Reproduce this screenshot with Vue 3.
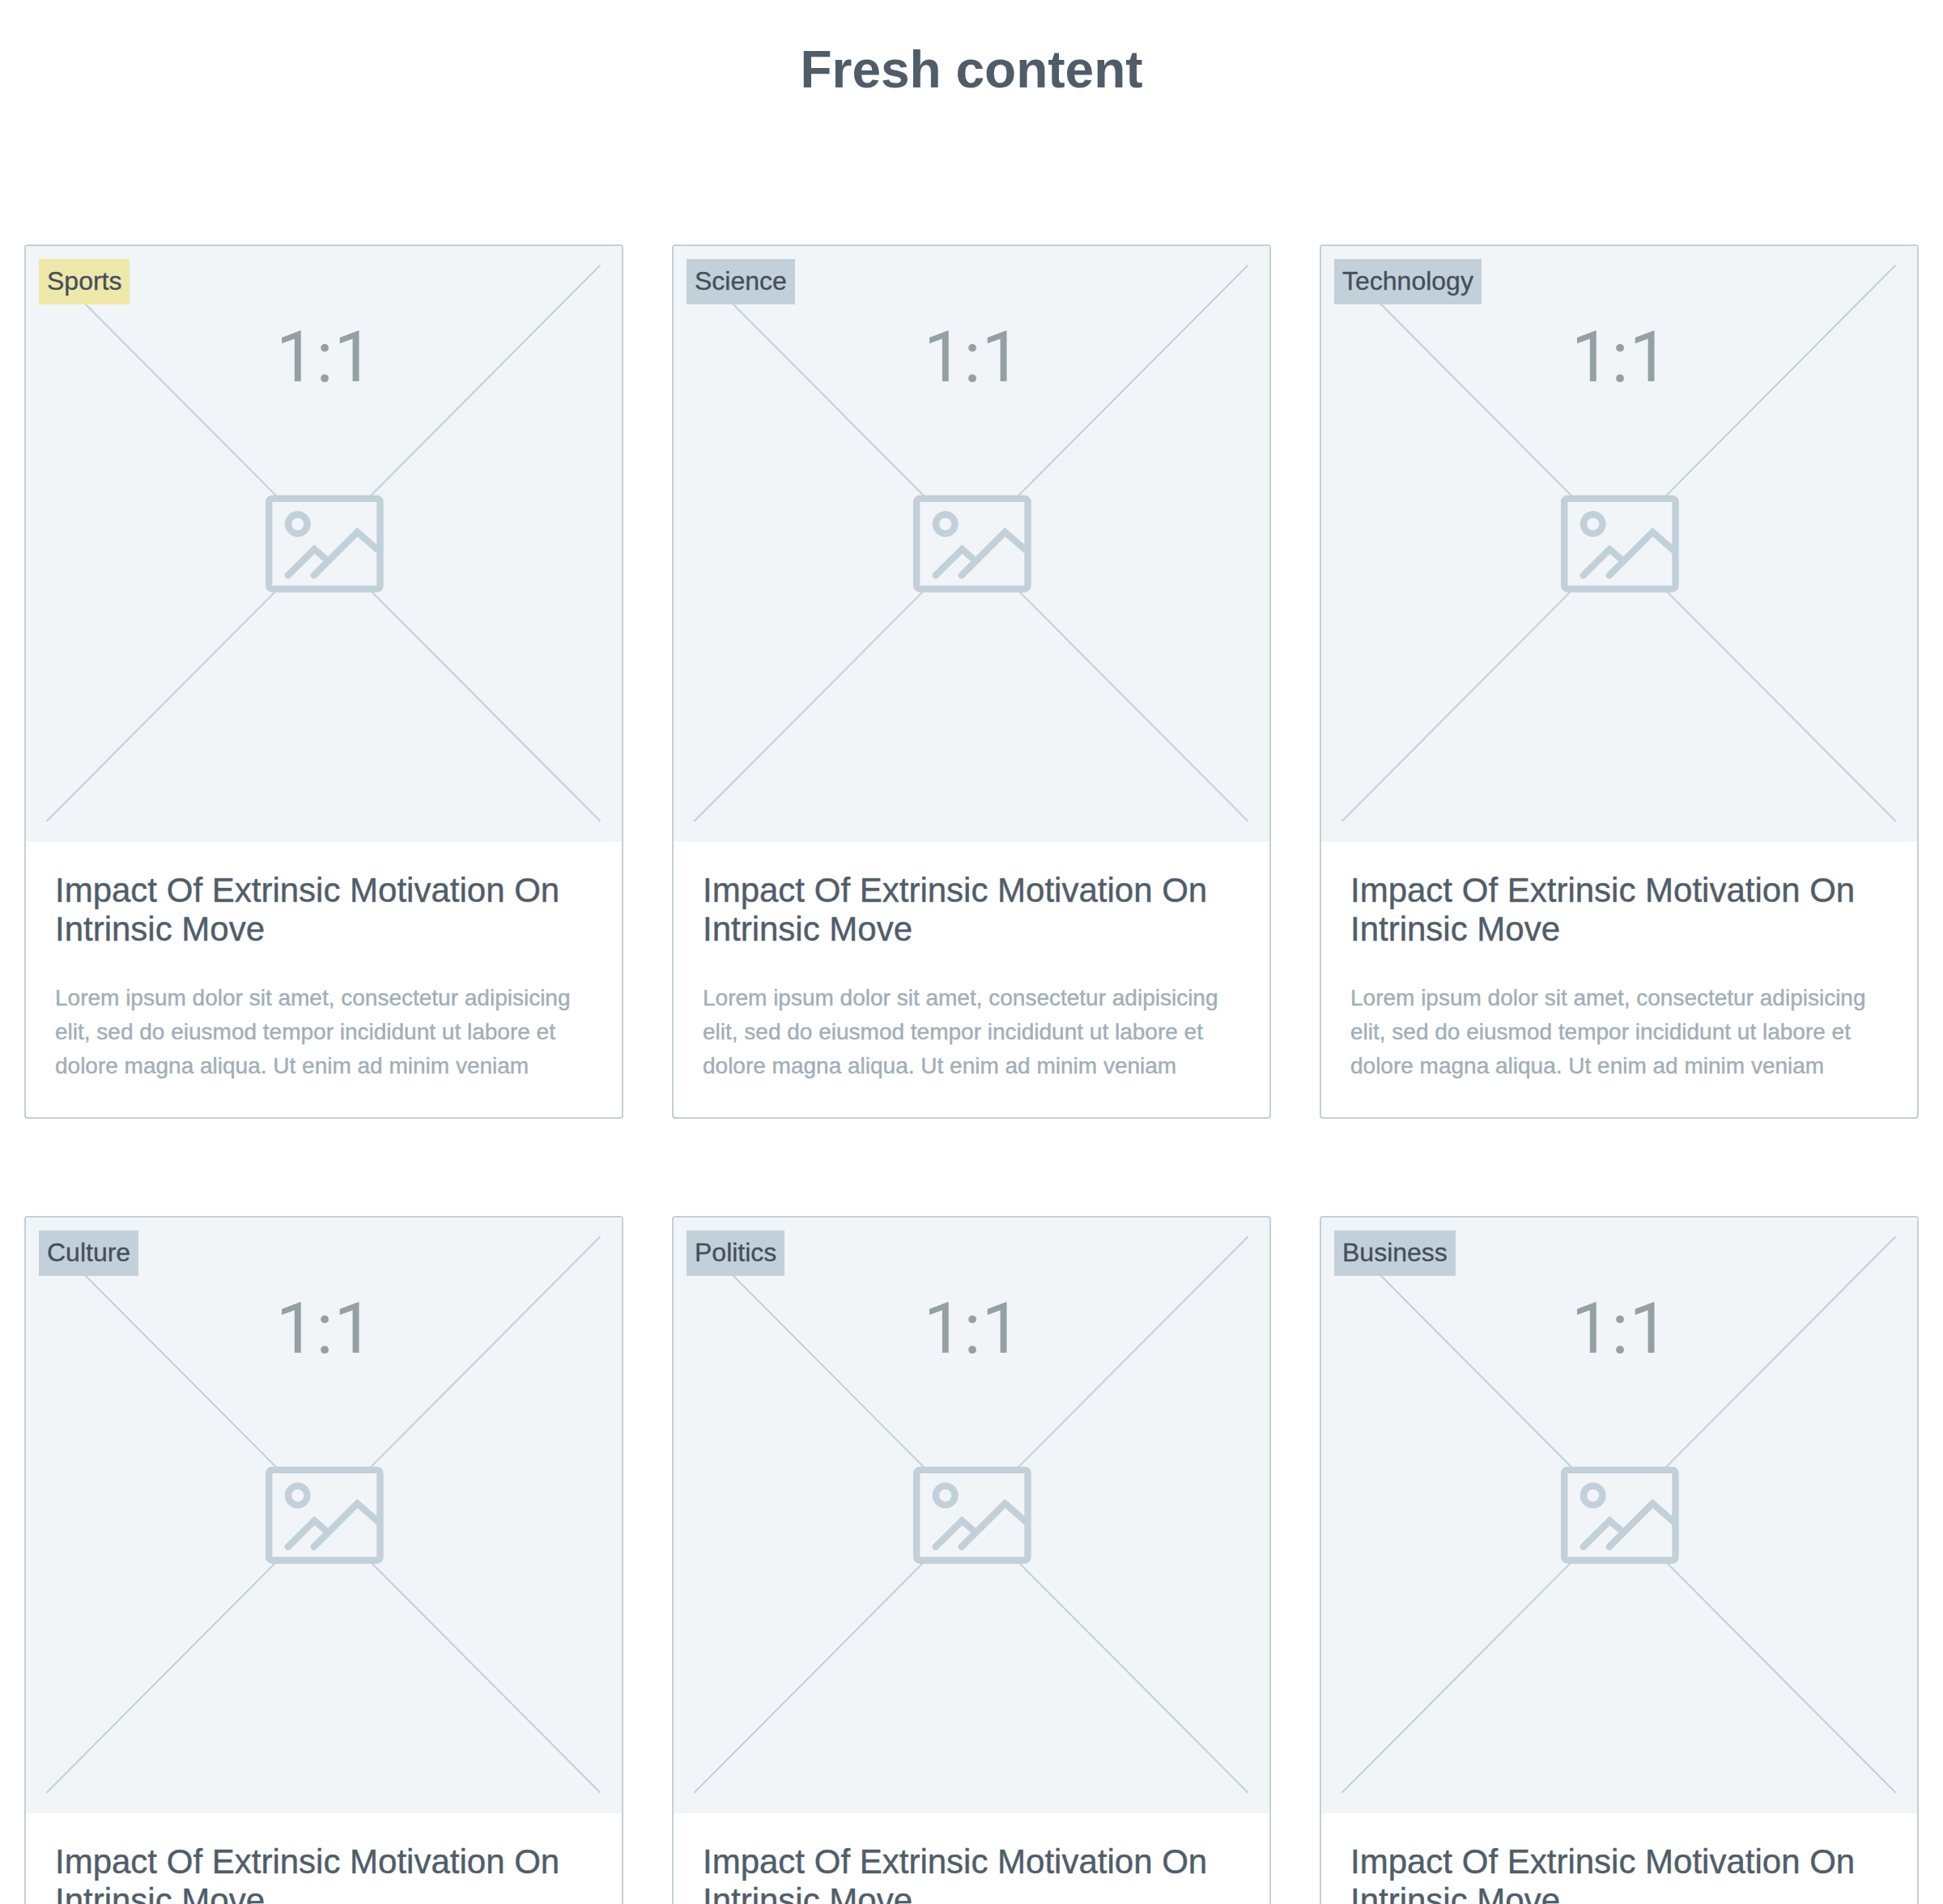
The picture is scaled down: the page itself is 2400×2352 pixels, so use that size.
<script setup>
const cards = [
  { tag: 'Sports', active: true },
  { tag: 'Science' },
  { tag: 'Technology' },
  { tag: 'Culture' },
  { tag: 'Politics' },
  { tag: 'Business' },
]
</script>

<template>
  <main class="page">
    <h1 class="heading">Fresh content</h1>
    <section class="grid">
      <article v-for="card in cards" :key="card.tag" class="card">
        <div class="media">
          <svg class="placeholder" viewBox="0 0 736 736" aria-hidden="true">
            <g fill="none" stroke="#c2d0d9">
              <path d="M25.5 23.5 709.5 710.5M709.5 23.5 25.5 710.5" stroke-width="2" />
              <g stroke-width="8.4">
                <rect x="300.2" y="311.9" width="137.3" height="111.6" rx="4" fill="#f1f5f8" />
                <circle cx="335.7" cy="343.3" r="11.8" />
                <path d="M323.7 406.7 356.3 374.4 371 387.2M355.7 406.7 409.3 353.2 435 375.6" stroke-linecap="round" />
              </g>
            </g>
            <text class="ratio" x="369.6" y="166.7" text-anchor="middle">1:1</text>
          </svg>
          <span class="tag" :class="{ active: card.active }">{{ card.tag }}</span>
        </div>
        <div class="body">
          <h2 class="title">Impact Of Extrinsic Motivation On Intrinsic Move</h2>
          <p class="text">
            Lorem ipsum dolor sit amet, consectetur adipisicing elit, sed do eiusmod tempor incididunt ut labore et
            dolore magna aliqua. Ut enim ad minim veniam
          </p>
        </div>
      </article>
    </section>
  </main>
</template>

<style>
body {
  background: #fff;
}
</style>

<style scoped>
.page {
  box-sizing: border-box;
  height: 2352px;
  overflow: hidden;
  padding: 49px 30px 0;
  font-family: "Liberation Sans", Arial, sans-serif;
}
.heading {
  margin: 0 0 179px;
  font-size: 64px;
  line-height: 74px;
  font-weight: 700;
  text-align: center;
  color: #505d69;
}
.grid {
  display: grid;
  grid-template-columns: repeat(3, 1fr);
  gap: 120px 60px;
}
.card {
  box-sizing: border-box;
  height: 1080px;
  border: 2px solid #c2d0d9;
  border-radius: 4px;
  overflow: hidden;
}
.media {
  position: relative;
  height: 736px;
  background: #f1f5f8;
}
.placeholder {
  display: block;
  width: 100%;
  height: 100%;
}
.ratio {
  font-family: Roboto, sans-serif;
  font-size: 87px;
  letter-spacing: 1px;
  fill: #95a0a5;
}
.tag {
  position: absolute;
  top: 16px;
  left: 16px;
  padding: 0 10px 1px;
  font-size: 32px;
  line-height: 55px;
  color: #434e5c;
  background: #c2d0d9;
  -webkit-text-stroke: 0.3px;
}
.tag.active {
  background: #eee8aa;
}
.body {
  padding: 36px;
}
.title {
  margin: 0 0 40px;
  font-size: 42px;
  line-height: 48px;
  font-weight: 400;
  color: #505d69;
  -webkit-text-stroke: 0.4px;
}
.text {
  margin: 0;
  font-size: 28px;
  line-height: 42px;
  color: #a1aeb7;
  -webkit-text-stroke: 0.4px;
}
</style>
